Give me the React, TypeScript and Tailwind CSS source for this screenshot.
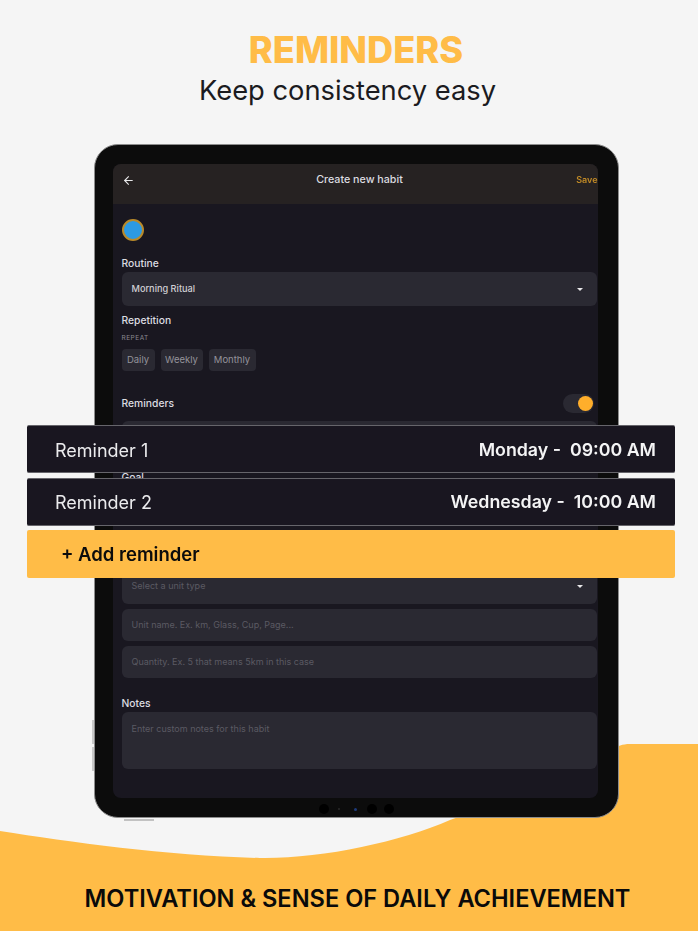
import { ArrowLeft } from 'lucide-react'

const sans = "font-['Inter','Liberation_Sans',sans-serif]"

function Caret() {
  return <span className="h-0 w-0 border-x-[3px] border-t-[3px] border-x-transparent border-t-[#e8e8ea]" />
}

function Field({ text, caret, h = 'h-[32px]' }: { text: string; caret?: boolean; h?: string }) {
  return (
    <div className={`flex ${h} w-[475px] items-center justify-between rounded-[6px] bg-[#2a2932] pl-[10px] pr-[14px] text-[9px] text-[#5b5a63]`}>
      <span>{text}</span>
      {caret && <Caret />}
    </div>
  )
}

function Chip({ label, w }: { label: string; w: string }) {
  return (
    <span className={`flex h-[22px] ${w} items-center justify-center rounded-[4px] bg-[#2a2932] text-[9.5px] text-[#94939a]`}>
      {label}
    </span>
  )
}

function ReminderRow({ name, when }: { name: string; when: string }) {
  return (
    <div className="flex h-[48px] items-center justify-between rounded-[2px] border-y border-[#66656b] bg-[#191620] pl-[28px] pr-[19px] pt-[2px]">
      <span className="text-[18px] text-[#ebebed]">{name}</span>
      <span className="whitespace-pre text-[17.8px] font-semibold text-[#f4f4f5]">{when}</span>
    </div>
  )
}

export default function App() {
  return (
    <div className={`relative flex h-[934px] w-[700px] flex-col items-center overflow-hidden bg-[#f5f5f5] ${sans}`}>
      {/* yellow wave behind the tablet */}
      <svg className="absolute left-0 top-0" width="700" height="934" viewBox="0 0 700 934">
        <rect x="0" y="931" width="700" height="3" fill="#ffffff" />
        <rect x="698" y="0" width="2" height="934" fill="#ffffff" />
        <path
          d="M0 831 C70 842 170 856 260 858 C320 859 400 842 450 820 C520 796 580 768 612 750 C618 746 622 744 630 744 L698 744 L698 931 L0 931 Z"
          fill="#ffbc47"
        />
      </svg>

      <h1 className="relative ml-[12px] mt-[29px] text-[36.2px] font-extrabold leading-[42px] text-[#ffbc47]">REMINDERS</h1>
      <p className="relative ml-[-5px] mt-[1px] text-[27.3px] leading-[38px] text-[#1b1b1f]">Keep consistency easy</p>

      {/* tablet */}
      <div className="relative ml-[12px] mt-[34px] flex h-[674px] w-[525px] flex-col rounded-[24px] border-[1.5px] border-[#8d8d8d] bg-[#0c0c0c] pl-[18px] pt-[19px]">
        <span className="absolute left-[-3px] top-[575px] h-[24px] w-[2px] bg-[#c9c9c9]" />
        <span className="absolute left-[-3px] top-[602px] h-[24px] w-[2px] bg-[#c9c9c9]" />
        <span className="absolute bottom-[-4px] left-[29px] h-[2px] w-[30px] bg-[#c2c2c2]" />

        <div className="flex h-[634px] w-[485px] flex-col rounded-[8px] bg-[#191720] text-[#dcdce0] blur-[0.35px]">
          <div className="relative flex h-[40px] shrink-0 items-center justify-center rounded-t-[8px] bg-[#262222] pb-[8px] text-[10.7px] font-medium">
            <ArrowLeft size={13} className="absolute left-[9px] text-[#e8e8ea]" />
            <span className="ml-[9px]">Create new habit</span>
            <span className="absolute right-0 text-[9px] font-semibold text-[#c08a26]">Save</span>
          </div>

          <div className="flex flex-col pl-[9px]">
            <div className="mt-[15px] h-[22px] w-[22px] rounded-full border-2 border-[#b98a2a] bg-[#2c9ae4]" />
            <span className="mt-[16px] text-[10.3px] font-medium leading-[12px]">Routine</span>
            <div className="mt-[3px] flex h-[34px] w-[475px] items-center justify-between rounded-[6px] bg-[#2a2932] pl-[10px] pr-[14px] text-[9.2px] font-medium text-[#cfcfd3]">
              <span>Morning Ritual</span>
              <Caret />
            </div>
            <span className="mt-[8px] text-[10.3px] font-medium leading-[12px]">Repetition</span>
            <span className="mt-[8px] text-[6.5px] leading-[8px] tracking-[0.5px] text-[#8a8990]">REPEAT</span>
            <div className="mt-[7px] flex gap-[6px]">
              <Chip label="Daily" w="w-[33px]" />
              <Chip label="Weekly" w="w-[42px]" />
              <Chip label="Monthly" w="w-[47px]" />
            </div>
            <div className="mt-[23px] flex h-[19px] w-[472px] items-center justify-between">
              <span className="text-[10.3px] font-medium">Reminders</span>
              <div className="flex h-[19px] w-[31px] items-center justify-end rounded-full bg-[#2a2932] pr-[1px]">
                <span className="h-[15px] w-[15px] rounded-full bg-[#ffae2b]" />
              </div>
            </div>
            <div className="mt-[8px] h-[34px] w-[475px] rounded-[6px] bg-[#2a2932]" />
            <span className="mt-[16px] text-[10.3px] font-medium leading-[12px]">Goal</span>
            <div className="mt-[85px] flex flex-col gap-[5px]">
              <Field text="Select a unit type" caret h="h-[36px]" />
              <Field text="Unit name. Ex. km, Glass, Cup, Page..." />
              <Field text="Quantity. Ex. 5 that means 5km in this case" />
            </div>
            <span className="mt-[19px] text-[10.3px] font-medium leading-[12px]">Notes</span>
            <div className="mt-[3px] h-[57px] w-[475px] rounded-[6px] bg-[#2a2932] pl-[10px] pt-[10px] text-[9px] text-[#5b5a63]">
              Enter custom notes for this habit
            </div>
          </div>
        </div>

        {/* camera dots */}
        <div className="mt-[6px] flex items-center pl-[206px] blur-[0.35px]">
          <span className="h-[10px] w-[10px] rounded-full bg-[#000000]" />
          <span className="ml-[9px] h-[2px] w-[2px] rounded-full bg-[#2a2a2a]" />
          <span className="ml-[14px] h-[3px] w-[3px] rounded-full bg-[#1d3a7a]" />
          <span className="ml-[10px] h-[10px] w-[10px] rounded-full bg-[#000000]" />
          <span className="ml-[7px] h-[10px] w-[10px] rounded-full bg-[#000000]" />
        </div>
      </div>

      {/* reminder rows laid over the tablet */}
      <div className="absolute left-[27px] top-[425px] flex w-[648px] flex-col gap-[4.5px]">
        <ReminderRow name="Reminder 1" when="Monday -  09:00 AM" />
        <ReminderRow name="Reminder 2" when="Wednesday -  10:00 AM" />
        <div className="flex h-[48px] items-center rounded-[2px] bg-[#ffbc47] pl-[34px] pt-[2px] text-[18.5px] font-semibold text-[#0c0c0c]">
          + Add reminder
        </div>
      </div>

      <p className="absolute left-[15px] top-[884px] w-[685px] text-center text-[23.6px] font-semibold leading-[30px] text-[#0a0a0a]">
        MOTIVATION &amp; SENSE OF DAILY ACHIEVEMENT
      </p>
    </div>
  )
}
